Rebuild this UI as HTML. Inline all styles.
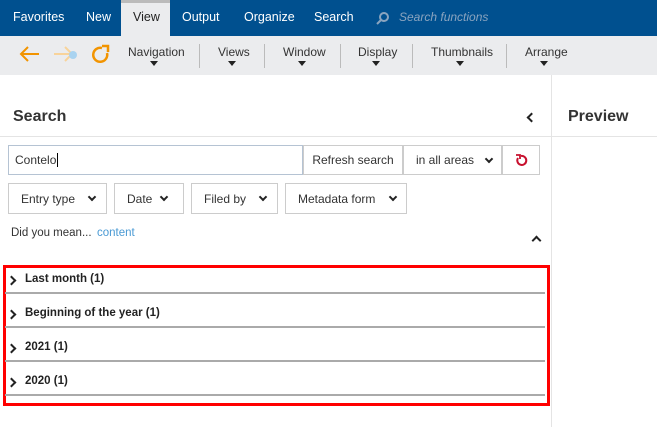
<!DOCTYPE html>
<html><head><style>
*{box-sizing:border-box;margin:0;padding:0}
body{width:657px;height:427px;overflow:hidden;background:#fff;font-family:"Liberation Sans",sans-serif;position:relative;color:#222}
.a{position:absolute}
.top{left:0;top:0;width:657px;height:36px;background:#00508f}
.tab{top:0;height:36px;line-height:34px;color:#fff;font-size:12.5px}
.tb{left:0;top:36px;width:657px;height:39px;background:#ebecee}
.tl{font-size:12px;color:#333;text-align:center}
.tri{width:0;height:0;border-left:4px solid transparent;border-right:4px solid transparent;border-top:5px solid #222}
.sep{top:44px;width:1px;height:24px;background:#bbb}
.box{border:1px solid #ccc;background:#fff;font-size:12px;color:#333}
.chev{width:6px;height:6px;border-right:2px solid #222;border-bottom:2px solid #222;transform:rotate(45deg)}
.row{left:5px;width:540px;height:2px;background:#aaa}
.rt{left:11px;font-size:11.5px;font-weight:bold;color:#222}
.rc{width:7px;height:7px;border-right:2.5px solid #222;border-top:2.5px solid #222;transform:rotate(45deg)}
</style></head><body>
<div class="a top"></div>
<div class="a" style="left:121px;top:0;width:49px;height:36px;background:#ebecee;border-top:3px solid #bbb"></div>
<div class="a tab" style="left:13px">Favorites</div>
<div class="a tab" style="left:86px">New</div>
<div class="a tab" style="left:133px;color:#222">View</div>
<div class="a tab" style="left:182px">Output</div>
<div class="a tab" style="left:244px">Organize</div>
<div class="a tab" style="left:314px">Search</div>
<svg class="a" style="left:376px;top:11px" width="14" height="14"><circle cx="8" cy="6" r="4" fill="none" stroke="#8aa4bf" stroke-width="2"/><line x1="5" y1="9" x2="1" y2="13" stroke="#8aa4bf" stroke-width="2"/></svg>
<div class="a tab" style="left:399px;color:#8aa4bf;font-style:italic;font-size:12px">Search functions</div>
<div class="a tb"></div>
<svg class="a" style="left:18px;top:44px" width="95" height="20">
<path d="M3 10H21M10 3L3 10L10 17" fill="none" stroke="#f29400" stroke-width="2"/>
<path d="M36 10H54M47 3L54 10L47 17" fill="none" stroke="#f8d39a" stroke-width="2"/>
<circle cx="55" cy="11" r="4" fill="#a9d3f0"/>
<path d="M89 9A7 7 0 1 1 84 4" fill="none" stroke="#f29400" stroke-width="2.5"/><path d="M84 2H90V8" fill="none" stroke="#f29400" stroke-width="2.5"/>
</svg>
<div class="a tl" style="left:128px;top:45px">Navigation</div><div class="a tri" style="left:150px;top:61px"></div>
<div class="a sep" style="left:199px"></div>
<div class="a tl" style="left:218px;top:45px">Views</div><div class="a tri" style="left:228px;top:61px"></div>
<div class="a sep" style="left:264px"></div>
<div class="a tl" style="left:283px;top:45px">Window</div><div class="a tri" style="left:298px;top:61px"></div>
<div class="a sep" style="left:340px"></div>
<div class="a tl" style="left:358px;top:45px">Display</div><div class="a tri" style="left:372px;top:61px"></div>
<div class="a sep" style="left:412px"></div>
<div class="a tl" style="left:431px;top:45px">Thumbnails</div><div class="a tri" style="left:456px;top:61px"></div>
<div class="a sep" style="left:506px"></div>
<div class="a tl" style="left:525px;top:45px">Arrange</div><div class="a tri" style="left:540px;top:61px"></div>
<div class="a" style="left:551px;top:75px;width:1px;height:352px;background:#e4e4e4"></div>
<div class="a" style="left:0;top:136px;width:657px;height:1px;background:#e4e4e4"></div>
<div class="a" style="left:13px;top:108px;font-size:16px;font-weight:bold;color:#333">Search</div>
<div class="a" style="left:568px;top:108px;font-size:16px;font-weight:bold;color:#333">Preview</div>
<div class="a" style="left:528px;top:114px;width:7px;height:7px;border-left:2px solid #222;border-bottom:2px solid #222;transform:rotate(45deg)"></div>
<div class="a box" style="left:8px;top:145px;width:295px;height:30px;border-color:#b5c3d3;padding:7px 6px;background:#fff">Contelo<span style="border-left:1px solid #000;margin-left:1px"></span></div>
<div class="a box" style="left:303px;top:145px;width:100px;height:30px;padding:7px 0;text-align:center">Refresh search</div>
<div class="a box" style="left:403px;top:145px;width:99px;height:30px;padding:7px 12px">in all areas</div>
<div class="a chev" style="left:486px;top:156px"></div>
<div class="a box" style="left:502px;top:145px;width:38px;height:30px"></div>
<svg class="a" style="left:514px;top:153px" width="14" height="14"><path d="M4 5A4.5 4.5 0 1 0 7 3" fill="none" stroke="#c8102e" stroke-width="2"/><path d="M2 2H6V6" fill="none" stroke="#c8102e" stroke-width="1.8"/></svg>
<div class="a box" style="left:8px;top:183px;width:99px;height:31px;padding:8px 12px">Entry type</div><div class="a chev" style="left:89px;top:194px"></div>
<div class="a box" style="left:114px;top:183px;width:70px;height:31px;padding:8px 12px">Date</div><div class="a chev" style="left:161px;top:194px"></div>
<div class="a box" style="left:191px;top:183px;width:87px;height:31px;padding:8px 12px">Filed by</div><div class="a chev" style="left:260px;top:194px"></div>
<div class="a box" style="left:285px;top:183px;width:122px;height:31px;padding:8px 12px">Metadata form</div><div class="a chev" style="left:390px;top:194px"></div>
<div class="a" style="left:11px;top:227px;font-size:11.5px;color:#333">Did you mean...</div>
<div class="a" style="left:97px;top:227px;font-size:11.5px;color:#4a9ad4">content</div>
<div class="a" style="left:533px;top:237px;width:7px;height:7px;border-left:2px solid #222;border-top:2px solid #222;transform:rotate(45deg)"></div>
<div class="a" style="left:3px;top:265px;width:547px;height:141px;border:3px solid #f00"></div>
<div class="a rc" style="left:8px;top:277px"></div><div class="a rt" style="left:25px;top:273px">Last month (1)</div><div class="a row" style="top:292px"></div>
<div class="a rc" style="left:8px;top:311px"></div><div class="a rt" style="left:25px;top:307px">Beginning of the year (1)</div><div class="a row" style="top:326px"></div>
<div class="a rc" style="left:8px;top:345px"></div><div class="a rt" style="left:25px;top:341px">2021 (1)</div><div class="a row" style="top:360px"></div>
<div class="a rc" style="left:8px;top:379px"></div><div class="a rt" style="left:25px;top:375px">2020 (1)</div><div class="a row" style="top:394px"></div>
</body></html>
